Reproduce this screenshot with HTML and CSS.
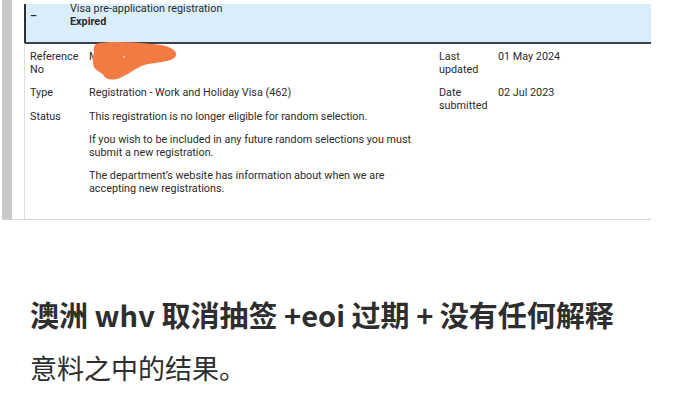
FILE: index.html
```html
<!DOCTYPE html>
<html lang="zh-CN">
<head>
    <meta charset="UTF-8">
    <meta name="viewport" content="width=device-width, initial-scale=1.0">
    <title>澳洲whv取消抽签</title>
    <link rel="stylesheet" href="styles.css">
</head>
<body>

    <div class="shot">
        <div class="rail"></div>
        <div class="card">
            <div class="card-head">
                <span class="toggle">–</span>
                <div class="head-text">
                    <div>Visa pre-application registration</div>
                    <div class="state">Expired</div>
                </div>
            </div>

            <div class="card-body">
                <dl class="details main">
                    <dt>Reference No</dt>
                    <dd class="ref">M</dd>
                    <dt>Type</dt>
                    <dd>Registration - Work and Holiday Visa (462)</dd>
                    <dt>Status</dt>
                    <dd class="status">
                        <p>This registration is no longer eligible for random selection.</p>
                        <p>If you wish to be included in any future random selections you must submit a new registration.</p>
                        <p>The department’s website has information about when we are accepting new registrations.</p>
                    </dd>
                </dl>
                <dl class="details side">
                    <dt>Last updated</dt>
                    <dd>01 May 2024</dd>
                    <dt>Date submitted</dt>
                    <dd>02 Jul 2023</dd>
                </dl>

                <!-- scribble hiding the reference number -->
                <svg class="scribble" width="86" height="40" viewBox="0 0 86 40">
                    <path d="M4,3 C14,0 40,1 60,3 C75,4 85,8 84,14 C83,20 70,21 56,23 C46,25 40,31 30,36 C22,40 14,39 12,35 C10,31 5,31 2,26 C0,21 1,15 2,11 C1,7 2,5 4,3 Z" fill="#f27a43"/>
                    <circle cx="32" cy="16" r="1" fill="#f6c7ad"/>
                </svg>
            </div>
        </div>
    </div>

    <div class="post">
        <h1 class="post-title">澳洲 whv 取消抽签 +eoi 过期 + 没有任何解释</h1>
        <p class="post-text">意料之中的结果。</p>
    </div>

</body>
</html>
```

FILE: styles.css
```css
body {
    margin: 0;
    background-color: #fff;
    color: #2b2b2b;
}
.shot {
    display: flex;
    width: 649px;
    height: 219px;
    margin-left: 2px;
    border-bottom: 1px solid #d4d4d4;
    font-family: Roboto, "Liberation Sans", sans-serif;
    font-size: 10.8px;
    line-height: 12.5px;
}
.rail {
    width: 10px;
    background-color: #c9c9c9;
}
.card {
    flex: 1;
    display: flex;
    flex-direction: column;
    margin-left: 12px;
    padding-top: 4px;
}
.card-head {
    display: flex;
    height: 38px;
    background-color: #d9eefa;
    border-left: 2px solid #2c2f33;
    border-bottom: 2px solid #3a4147;
    border-bottom-left-radius: 2px;
}
.toggle {
    width: 40px;
    padding-left: 4px;
    padding-top: 6px;
    font-weight: bold;
}
.head-text {
    margin-top: -1px;
}
.state {
    font-weight: bold;
}
.card-body {
    position: relative;
    flex: 1;
    display: flex;
    padding: 7px 0 0 5px;
    border-left: 1px solid #dedede;
}
.details {
    display: grid;
    grid-template-columns: 59px auto;
    row-gap: 11px;
    align-content: start;
    margin: 0;
}
.details dd {
    margin: 0;
}
.main {
    width: 409px;
    grid-template-columns: 59px 333px;
}
.side {
    flex: 1;
}
.side dt {
    width: 45px;
}
.status p {
    margin: 0 0 11px;
}
.scribble {
    position: absolute;
    left: 67px;
    top: -3px;
}
.post {
    padding: 74px 30px 0;
    color: #2e2e2e;
}
.post-title {
    margin: 0;
    font-family: "Noto Sans CJK SC", sans-serif;
    font-size: 29px;
    font-weight: bold;
    line-height: 40px;
}
.post-text {
    margin: 17px 0 0;
    font-family: "Noto Sans CJK SC", sans-serif;
    font-size: 27px;
    line-height: 34px;
}
```
